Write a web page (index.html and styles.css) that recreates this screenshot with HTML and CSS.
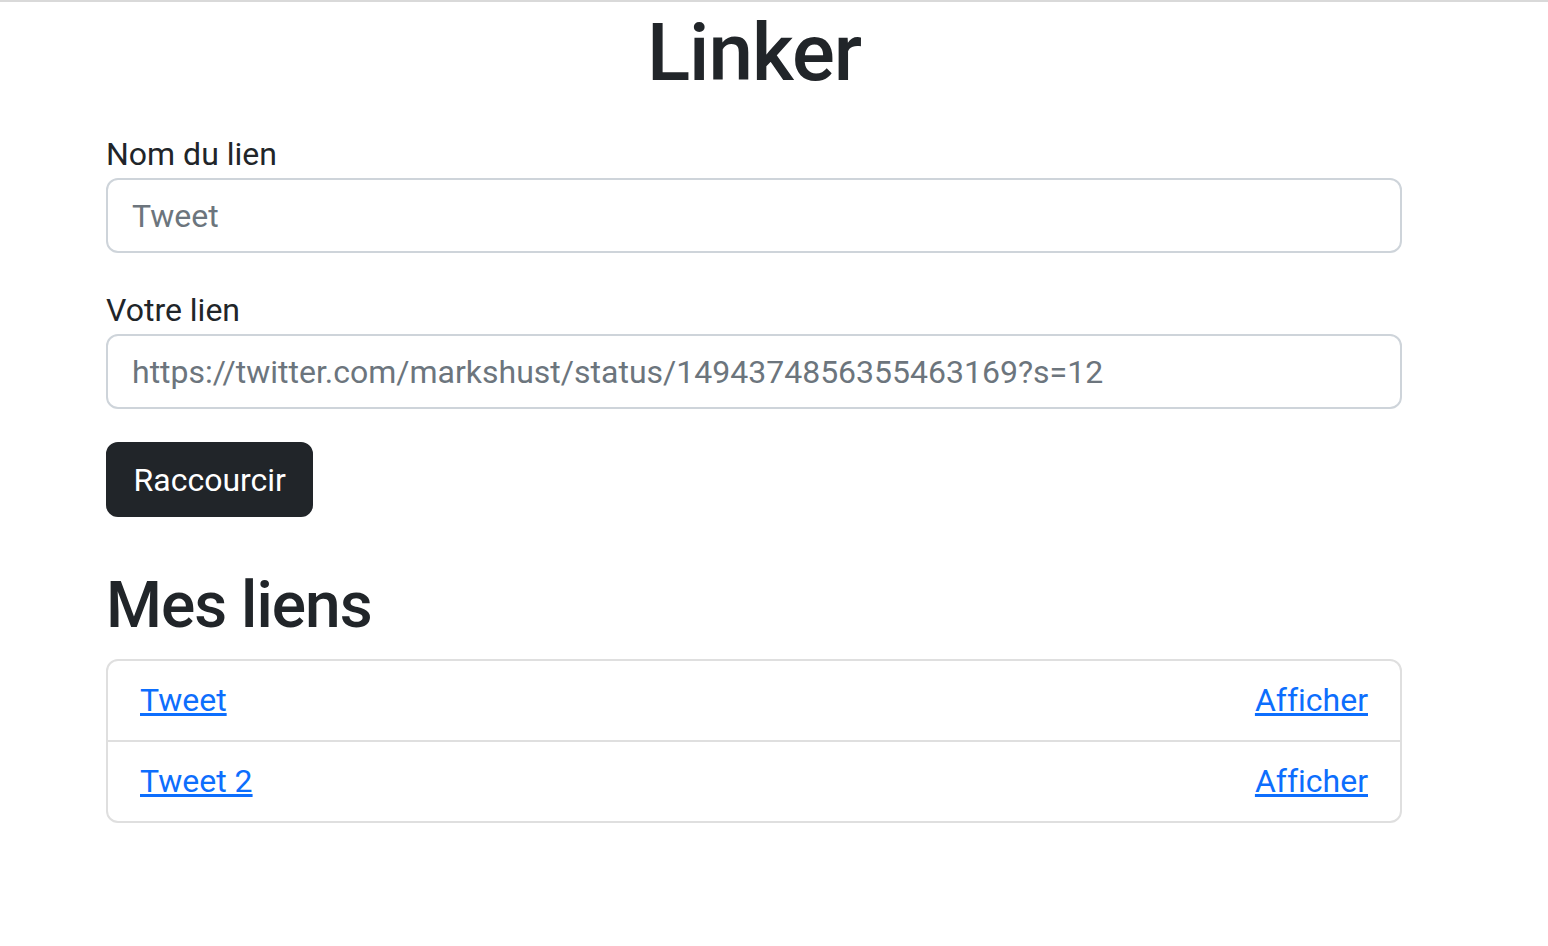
FILE: index.html
```html
<!DOCTYPE html>
<html lang="fr">
<head>
<meta charset="utf-8">
<title>Linker</title>
<link rel="stylesheet" href="styles.css">
</head>
<body>
<main class="page">
  <h1 class="title">Linker</h1>
  <form class="form">
    <div class="field">
      <label class="field-label" for="name">Nom du lien</label>
      <input class="field-input" id="name" type="text" placeholder="Tweet">
    </div>
    <div class="field">
      <label class="field-label" for="url">Votre lien</label>
      <input class="field-input" id="url" type="text" placeholder="https://twitter.com/markshust/status/1494374856355463169?s=12">
    </div>
    <button class="btn" type="button">Raccourcir</button>
  </form>
  <h2 class="section-title">Mes liens</h2>
  <ul class="links">
    <li class="link-row"><a href="#">Tweet</a><a href="#">Afficher</a></li>
    <li class="link-row"><a href="#">Tweet 2</a><a href="#">Afficher</a></li>
  </ul>
</main>
</body>
</html>
```
FILE: styles.css
```css
* { box-sizing: border-box; }
html, body { margin: 0; padding: 0; }
body {
  border-top: 2px solid #d9d9d9;
  background: #fff;
  color: #212529;
  font-family: Roboto, "Liberation Sans", Arial, sans-serif;
  font-size: 32px;
  line-height: 1.5;
  font-variant-ligatures: none;
}
.page {
  width: 1296px;
  margin-left: 106px;
  display: flex;
  flex-direction: column;
}
.title {
  margin: 3px 0 29px;
  font-size: 80px;
  font-weight: 500;
  line-height: 1.2;
  letter-spacing: -1px;
  text-align: center;
}
.form {
  display: flex;
  flex-direction: column;
  align-items: flex-start;
}
.field {
  width: 100%;
  margin-bottom: 33px;
}
.field-label {
  display: block;
  margin: 0;
}
.field-input {
  display: block;
  width: 100%;
  height: 75px;
  padding: 0 24px;
  border: 2px solid #ced4da;
  border-radius: 12px;
  font-family: inherit;
  font-size: 32px;
  color: #212529;
  background: #fff;
  outline: none;
}
.field-input::placeholder { color: #6c757d; opacity: 1; }
.btn {
  height: 75px;
  padding: 0 25.5px;
  border: 2px solid #212529;
  border-radius: 12px;
  background: #212529;
  color: #fff;
  font-family: inherit;
  font-size: 32px;
  line-height: 48px;
}
.section-title {
  margin: 51px 0 14px;
  font-size: 64px;
  font-weight: 500;
  line-height: 1.2;
  letter-spacing: -1px;
}
.links {
  list-style: none;
  margin: 0;
  padding: 0;
  border: 2px solid #dfdfdf;
  border-radius: 12px;
}
.link-row {
  display: flex;
  justify-content: space-between;
  padding: 15.5px 32px;
}
.link-row + .link-row { border-top: 2px solid #dfdfdf; }
.link-row a {
  color: #0d6efd;
  text-decoration: underline;
}
```
